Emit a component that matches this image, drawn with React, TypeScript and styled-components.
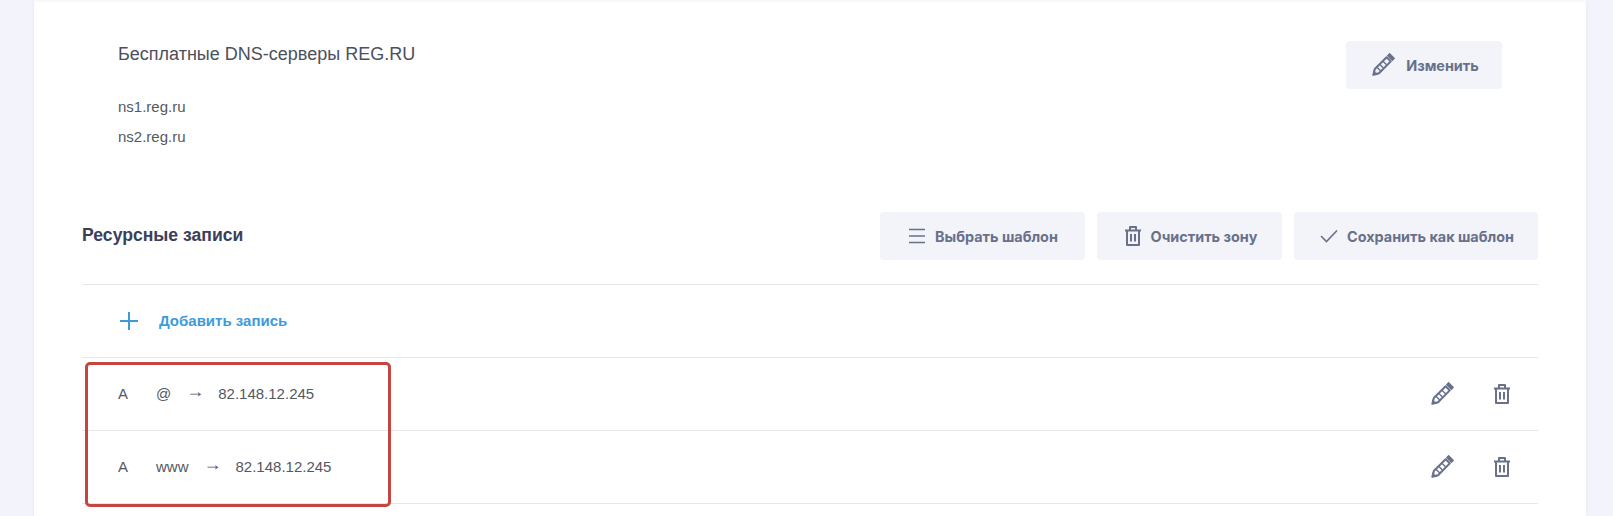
import React from "react";
import styled, { createGlobalStyle } from "styled-components";

const Global = createGlobalStyle`
  html, body { margin: 0; padding: 0; background: #f2f3fb; }
  body { font-family: "Liberation Sans", Arial, sans-serif; color: #434756; overflow: hidden; }
`;
const Page = styled.div`
  width: 1613px; height: 516px; box-sizing: border-box; padding: 0 27px 0 34px; overflow: hidden;
`;
const Panel = styled.main`
  background: #fff; height: 516px; box-sizing: border-box; padding: 3px 48px 0 48px;
  box-shadow: 0 0 4px rgba(60, 70, 110, 0.06), inset 0 3px 3px -2px rgba(60, 70, 110, 0.06);
  position: relative;
`;
const ServerBlock = styled.section`
  display: flex; justify-content: space-between; align-items: flex-start;
  height: 209px; box-sizing: border-box; padding: 38px 36px 0 36px;
`;
const Servers = styled.div`
  display: flex; flex-direction: column; padding-top: 2px;
`;
const ServerTitle = styled.div`
  font-size: 18px; line-height: 22px; color: #4b4f5e; margin-bottom: 27px;
`;
const ServerName = styled.div`
  font-size: 15px; line-height: 30px; color: #55585f;
`;
const Button = styled.button<{ $w: number; $gap: number }>`
  width: ${(p) => p.$w}px; height: 48px; border: 0; border-radius: 4px; background: #f2f4fa;
  display: flex; align-items: center; justify-content: center; gap: ${(p) => p.$gap}px;
  font-family: Inter, "Liberation Sans", sans-serif; font-size: 14.4px; font-weight: 700;
  color: #68708a; padding: 0 0 0 2px; flex: none;
`;
const Toolbar = styled.div`
  display: flex; align-items: flex-start; justify-content: space-between; height: 72px;
  border-bottom: 1px solid #e4e6ea; box-sizing: content-box;
`;
const Heading = styled.h2`
  margin: 0; padding-top: 13px; font-size: 17.6px; line-height: 20px; font-weight: 700; color: #3a405a;
`;
const Actions = styled.div`
  display: flex; gap: 12px;
`;
const AddRow = styled.div`
  height: 72px; border-bottom: 1px solid #e4e6ea; display: flex; align-items: center;
  padding-left: 38px; gap: 21px; color: #3d9bdc;
`;
const AddLabel = styled.span`
  font-size: 15px; font-weight: 700; padding-bottom: 2px;
`;
const Row = styled.div`
  height: 72px; border-bottom: 1px solid #e4e6ea; display: flex; align-items: center;
  padding: 0 27px 0 36px; font-size: 15px; color: #55585f;
`;
const Record = styled.div`
  flex: 1; display: flex; align-items: center; padding-bottom: 2px;
`;
const RType = styled.span` width: 38px; `;
const RHost = styled.span` margin-right: 16px; `;
const RArrow = styled.span` font-size: 18px; margin: 0 14px 0 -1px; padding-bottom: 4px; `;
const RowIcons = styled.div` display: flex; align-items: center; gap: 39px; color: #68708a; `;
const Highlight = styled.div`
  position: absolute; left: 51px; top: 362px; width: 306px; height: 145px; box-sizing: border-box;
  border: 3px solid #c4473f; border-radius: 5px;
`;

const Pencil = () => (
  <svg width="24" height="24" viewBox="0 0 24 24" fill="none" stroke="currentColor" strokeWidth="2">
    <path d="M17.2 2.6l1.4-1.4 4.2 4.2-1.4 1.4z" fill="currentColor" />
    <path d="M15.6 4.2l4.2 4.2L8 20.2l-5.4 1.3L3.8 16z" strokeLinejoin="round" />
    <path d="M6 14.2l4 4M9 11.6l3.4 3.4M12.2 8.4l3.4 3.4" strokeWidth="1.4" />
    <path d="M1.4 22.8l1-5.6 4.8 4.6z" fill="currentColor" stroke="none" />
  </svg>
);
const Trash = () => (
  <svg width="18" height="22" viewBox="0 0 18 22" fill="none" stroke="currentColor" strokeWidth="2" strokeLinejoin="round">
    <path d="M1 5.5h16M6 5V2h6v3M3 5.5V20h12V5.5M7 9v7.5M11 9v7.5" />
  </svg>
);
const Menu = () => (
  <svg width="16" height="16" viewBox="0 0 16 16" stroke="currentColor" strokeWidth="1.6">
    <path d="M0 1.5h16M0 8h16M0 14.5h16" />
  </svg>
);
const Check = () => (
  <svg width="18" height="14" viewBox="0 0 18 14" fill="none" stroke="currentColor" strokeWidth="1.6">
    <path d="M1 7l5.5 5.5L17 1.5" />
  </svg>
);
const Plus = () => (
  <svg width="18" height="18" viewBox="0 0 18 18" stroke="currentColor" strokeWidth="2">
    <path d="M9 0v18M0 9h18" />
  </svg>
);

const records = [
  { host: "@", ip: "82.148.12.245" },
  { host: "www", ip: "82.148.12.245" },
];

export default function App() {
  return (
    <Page>
      <Global />
      <Panel>
        <ServerBlock>
          <Servers>
            <ServerTitle>Бесплатные DNS-серверы REG.RU</ServerTitle>
            <ServerName>ns1.reg.ru</ServerName>
            <ServerName>ns2.reg.ru</ServerName>
          </Servers>
          <Button $w={156} $gap={11}><Pencil />Изменить</Button>
        </ServerBlock>
        <Toolbar>
          <Heading>Ресурсные записи</Heading>
          <Actions>
            <Button $w={205} $gap={10}><Menu />Выбрать шаблон</Button>
            <Button $w={185} $gap={9}><Trash />Очистить зону</Button>
            <Button $w={244} $gap={9}><Check />Сохранить как шаблон</Button>
          </Actions>
        </Toolbar>
        <AddRow><Plus /><AddLabel>Добавить запись</AddLabel></AddRow>
        {records.map((r) => (
          <Row key={r.host}>
            <Record>
              <RType>A</RType>
              <RHost>{r.host}</RHost>
              <RArrow>→</RArrow>
              <span>{r.ip}</span>
            </Record>
            <RowIcons><Pencil /><Trash /></RowIcons>
          </Row>
        ))}
        <Highlight />
      </Panel>
    </Page>
  );
}
